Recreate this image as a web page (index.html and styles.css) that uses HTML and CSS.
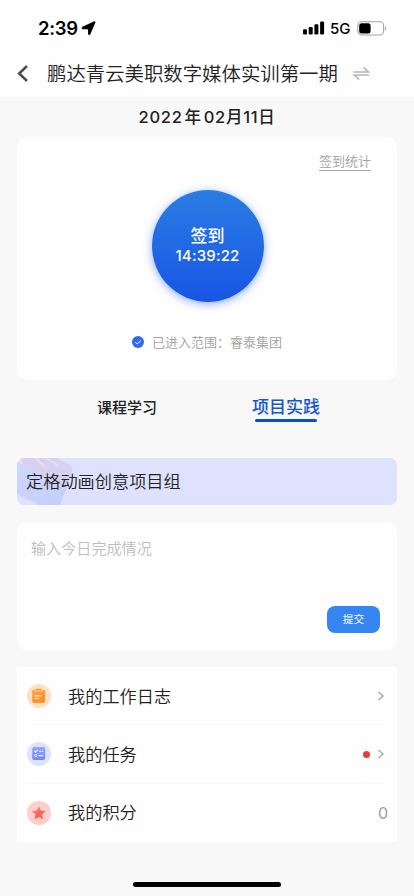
FILE: index.html
```html
<!DOCTYPE html>
<html lang="zh-CN">
<head>
<meta charset="utf-8">
<meta name="viewport" content="width=device-width, initial-scale=1">
<title>签到</title>
<link rel="stylesheet" href="styles.css">
</head>
<body>
<div class="app">
  <header class="header">
    <div class="status">
      <span class="clock">2:39</span>
      <svg class="location" width="15" height="15" viewBox="0 0 15 15"><path d="M14 1.300 8.900 13.300C8.600 14 7.500 13.900 7.500 13V7.900L1.900 7.800C.7 7.700.6 6.600 1.500 6.200L13.100.8C13.800.5 14.200.8 14 1.300Z" fill="#000" stroke="#000" stroke-width=".9"/></svg>
      <div class="status-right">
        <svg width="22" height="14" viewBox="0 0 22 14"><rect x="0" y="8.200" width="4" height="5.300" rx="1.200"/><rect x="5.700" y="6" width="4" height="7.500" rx="1.200"/><rect x="11.400" y="3.300" width="4" height="10.200" rx="1.200"/><rect x="17.100" y=".4" width="4" height="13.100" rx="1.200"/></svg>
        <span class="network">5G</span>
        <svg class="battery" width="30" height="15" viewBox="0 0 30 15"><rect x=".8" y=".8" width="25.800" height="13.200" rx="4" fill="none" stroke="#a3a3a3" stroke-width="1.100"/><rect x="2.200" y="2.200" width="11.400" height="10.400" rx="2.500"/><path d="M28 5.200c1.600.8 1.600 3.600 0 4.400z" fill="#a3a3a3"/></svg>
      </div>
    </div>
    <div class="nav">
      <svg class="back" width="12" height="18" viewBox="0 0 12 18"><path d="M10 1 2.200 8.500 10 16" fill="none" stroke="#4c4c4c" stroke-width="2.500"/></svg>
      <h1 class="title">鹏达青云美职数字媒体实训第一期</h1>
      <svg class="switch" width="17" height="14" viewBox="0 0 17 14"><path d="M.5 4.900H15.500L10.500.4M16 8.100H1.500L6.200 12.500" fill="none" stroke="#b5b5b5" stroke-width="1.500"/></svg>
    </div>
  </header>

  <main class="content">
    <div class="date"><span>2022</span><span class="year">年</span><span>02月11日</span></div>

    <section class="card checkin">
      <a class="stats">签到统计</a>
      <button class="punch"><span class="punch-label">签到</span><span class="punch-time">14:39:22</span></button>
      <div class="range">
        <svg width="12" height="12" viewBox="0 0 12 12"><circle cx="6" cy="6" r="6" fill="#2e69ee"/><path d="M3.200 6 5.200 8 8.900 4.400" fill="none" stroke="#fff" stroke-width="1"/></svg>
        <span>已进入范围：睿泰集团</span>
      </div>
    </section>

    <nav class="tabs">
      <a class="tab">课程学习</a>
      <a class="tab active">项目实践</a>
    </nav>

    <section class="group">
      <svg class="group-art" width="60" height="47" viewBox="0 0 60 47">
        <defs>
          <linearGradient id="art" x1="0" y1="0" x2="1" y2="1"><stop offset="0" stop-color="#cfd6fb"/><stop offset="1" stop-color="#c3cffa"/></linearGradient>
          <linearGradient id="lid" x1="0" y1="0" x2="1" y2="1"><stop offset="0" stop-color="#dccfeb"/><stop offset="1" stop-color="#d3d2f4"/></linearGradient>
        </defs>
        <path d="M3 0H40L53 7Q56 9 55 13L49 32 8 9Z" fill="url(#lid)"/>
        <path d="M0 4 7 7 49 32 43 47H22L0 36Z" fill="url(#art)"/>
        <path d="M18 0 28 8M29 0 42 8" stroke="#e6e1f6" stroke-width="1.700"/>
      </svg>
      <span class="group-name">定格动画创意项目组</span>
    </section>

    <section class="card report">
      <span class="placeholder">输入今日完成情况</span>
      <button class="submit">提交</button>
    </section>

    <section class="menu">
      <div class="row">
        <svg width="24" height="24" viewBox="0 0 24 24"><defs><linearGradient id="or" x1="0" y1="0" x2="1" y2="1"><stop offset="0" stop-color="#ffa13e"/><stop offset="1" stop-color="#fa8b29"/></linearGradient></defs><circle cx="12" cy="12" r="12" fill="#fee0c2"/><path d="M5.200 7.300Q5.200 6 6.600 6H16.800Q18 6 18 7.200V17.200Q18 19 16.200 19H7Q5.200 19 5.200 17.200Z" fill="url(#or)"/><path d="M7.500 7.100H15.500V5.300" fill="none" stroke="#fee0c2" stroke-width=".8"/><path d="M8.300 5.500H14.600" stroke="#ff9c39" stroke-width="1.500"/><path d="M7.500 11.900H14.700M7.500 14.500H12.300" stroke="#ffe1bd" stroke-width="1.100"/></svg>
        <span class="row-name">我的工作日志</span>
        <svg class="chevron" width="8" height="10" viewBox="0 0 8 10"><path d="M1.500 1 6.100 5 1.500 9" fill="none" stroke="#a0a0a0" stroke-width="1.200"/></svg>
      </div>
      <div class="row">
        <svg width="24" height="24" viewBox="0 0 24 24"><defs><linearGradient id="bl" x1="0" y1="0" x2="0" y2="1"><stop offset="0" stop-color="#92a4f8"/><stop offset="1" stop-color="#7188f3"/></linearGradient></defs><circle cx="12" cy="12" r="12" fill="#dde3ff"/><rect x="5.200" y="5" width="13" height="13" rx="2.200" fill="url(#bl)"/><path d="M7.300 8.900 8.500 10.100 10.500 8M11.700 9.300H16.300M11.700 13.600H16.300" fill="none" stroke="#eef1ff" stroke-width="1.100"/><circle cx="8.800" cy="13.600" r="1.100" fill="none" stroke="#eef1ff" stroke-width=".9"/></svg>
        <span class="row-name">我的任务</span>
        <i class="dot"></i>
        <svg class="chevron" width="8" height="10" viewBox="0 0 8 10"><path d="M1.500 1 6.100 5 1.500 9" fill="none" stroke="#a0a0a0" stroke-width="1.200"/></svg>
      </div>
      <div class="row">
        <svg width="24" height="24" viewBox="0 0 24 24"><defs><linearGradient id="rd" x1="0" y1="0" x2="1" y2="1"><stop offset="0" stop-color="#ff8d7d"/><stop offset=".6" stop-color="#f9604f"/><stop offset="1" stop-color="#fb7364"/></linearGradient></defs><circle cx="12" cy="12" r="12" fill="#fad0cc"/><path d="M11.800 5.700 13.600 9.900 18.200 10.300 14.700 13.400 15.800 18 11.800 15.700 7.800 18 8.800 13.400 5.300 10.300 10 9.900Z" fill="url(#rd)" stroke="url(#rd)" stroke-width=".6" stroke-linejoin="round"/></svg>
        <span class="row-name">我的积分</span>
        <span class="points">0</span>
      </div>
    </section>
  </main>
  <div class="home-bar"></div>
</div>
</body>
</html>
```
FILE: styles.css
```css
* { box-sizing: border-box; }

body {
  margin: 0;
  background: #f8f8f8;
  color: #222;
  font-family: Inter, "Noto Sans CJK SC", sans-serif;
}

svg { display: block; flex: none; }

button { border: 0; padding: 0; font-family: inherit; }

.app {
  width: 414px;
  height: 896px;
  display: flex;
  flex-direction: column;
  overflow: hidden;
}

.header { height: 97px; background: #fefefe; }

.status {
  height: 50px;
  padding: 6px 27px 0 38px;
  display: flex;
  align-items: center;
  color: #000;
}

.clock { width: 43px; font-size: 18.500px; font-weight: 600; letter-spacing: -.3px; }

.status-right { margin-left: auto; display: flex; align-items: center; }

.network { width: 27px; margin-left: 5px; font-size: 15px; font-weight: 500; }

.nav {
  height: 47px;
  padding-left: 17px;
  display: flex;
  align-items: center;
}

.title {
  margin: 0 15px 0 18px;
  font-size: 19.400px;
  font-weight: 350;
  line-height: 28px;
  white-space: nowrap;
}

.content { padding: 0 17px; }

.date {
  height: 40px;
  display: flex;
  justify-content: center;
  font-size: 16.500px;
  font-weight: 500;
  letter-spacing: .7px;
  line-height: 40px;
}

.year { margin: 0 2px; }

.card { background: #fefefe; border-radius: 10px; }

.checkin {
  height: 243px;
  padding: 15px 26px 0;
  display: flex;
  flex-direction: column;
  align-items: center;
}

.stats {
  align-self: flex-end;
  height: 19px;
  border-bottom: 1px solid #a5a5a5;
  color: #a0a0a0;
  font-size: 13px;
  font-weight: 350;
  line-height: 19px;
}

.punch {
  width: 112px;
  height: 112px;
  margin: 19px 0 0 1px;
  padding-bottom: 2px;
  display: flex;
  flex-direction: column;
  align-items: center;
  justify-content: center;
  border-radius: 50%;
  background: linear-gradient(#2a7de3, #1955e5);
  box-shadow: 0 2px 9px rgba(45, 104, 245, .55);
  color: #fff;
}

.punch-label { font-size: 17px; font-weight: 500; line-height: 21px; }

.punch-time { font-size: 15px; font-weight: 500; line-height: 18px; letter-spacing: .2px; }

.range {
  margin-top: 30px;
  display: flex;
  align-items: center;
  gap: 8px;
  color: #a0a0a0;
  font-size: 13px;
  font-weight: 350;
  line-height: 20px;
}

.tabs {
  height: 78px;
  padding: 14px 77px 0 80px;
  display: flex;
  justify-content: space-between;
}

.tab { font-size: 15px; font-weight: 500; line-height: 27px; }

.active {
  height: 29px;
  display: flex;
  flex-direction: column;
  align-items: center;
  color: #1557c8;
  font-size: 17px;
}

.active::after {
  content: "";
  width: 62px;
  height: 3px;
  margin-top: -2px;
  flex: none;
  border-radius: 2px;
  background: #0751c9;
}

.group {
  position: relative;
  height: 47px;
  padding-left: 9px;
  overflow: hidden;
  border-radius: 7px;
  background: #dee2fe;
}

.group-art { position: absolute; left: 0; top: 0; }

.group-name { position: relative; font-size: 17.200px; font-weight: 350; line-height: 48px; }

.report {
  height: 128px;
  margin-top: 17px;
  padding: 15px 17px 17px 14px;
  display: flex;
  flex-direction: column;
  justify-content: space-between;
}

.placeholder { color: #bebebe; font-size: 15.100px; font-weight: 350; line-height: 24px; }

.submit {
  width: 53px;
  height: 27px;
  align-self: flex-end;
  border-radius: 8px;
  background: #3586f0;
  color: #fff;
  font-size: 10.700px;
  line-height: 28px;
}

.menu { margin-top: 17px; padding: 0 9px 0 10px; background: #fefefe; }

.row {
  height: 58.300px;
  display: flex;
  align-items: center;
}

.row + .row { box-shadow: 0 -1px #fafafa; }

.row-name {
  margin: -2px auto 0 17px;
  font-size: 17.200px;
  font-weight: 350;
}

.chevron { margin-right: 3px; }

.dot {
  width: 7px;
  height: 7px;
  margin-right: 7px;
  border-radius: 50%;
  background: #ef3838;
}

.points { color: #a0a0a0; font-size: 16px; }

.home-bar {
  width: 148px;
  height: 5px;
  margin: auto auto 9px;
  border-radius: 3px;
  background: #000;
}
```
